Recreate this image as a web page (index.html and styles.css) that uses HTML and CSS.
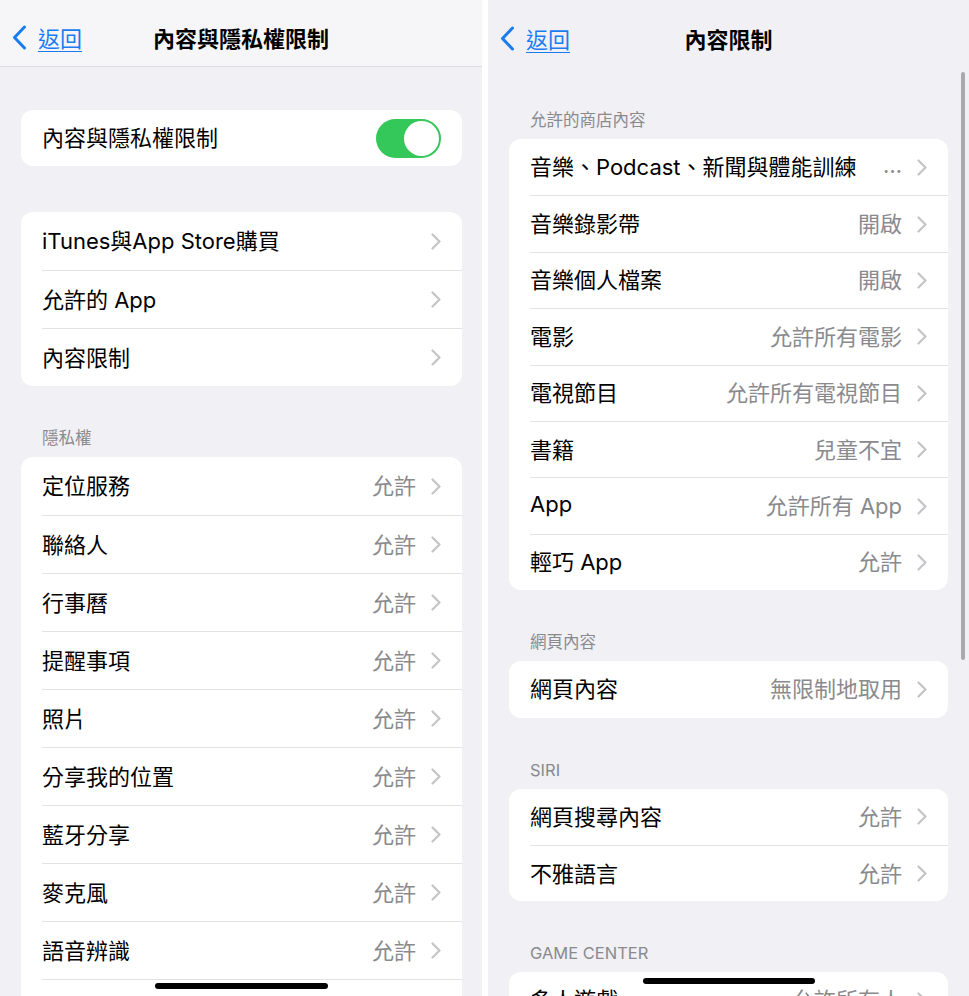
FILE: index.html
```html
<!DOCTYPE html>
<html lang="zh-Hant">
<head>
    <meta charset="UTF-8">
    <meta name="viewport" content="width=device-width, initial-scale=1.0">
    <title>內容與隱私權限制</title>
    <link rel="stylesheet" href="styles.css">
</head>
<body>
    <div class="screens">
        <!-- Pantalla izquierda -->
        <section class="phone phone-left">
            <header class="nav nav-divided">
                <a class="back" href="#">
                    <svg width="15" height="25" viewBox="0 0 15 25"><path d="M12.5 2 L2.5 12.5 L12.5 23" fill="none" stroke="#1b7cf2" stroke-width="3" stroke-linecap="round" stroke-linejoin="round"/></svg>
                    <span>返回</span>
                </a>
                <h1 class="nav-title">內容與隱私權限制</h1>
                <span></span>
            </header>
            <div class="content content-left">
                <div class="group group-toggle">
                    <div class="row">
                        <span class="label">內容與隱私權限制</span>
                        <span class="toggle"></span>
                    </div>
                </div>

                <div class="group">
                    <div class="row"><span class="label">iTunes與App Store購買</span><span class="value"></span><svg class="chev" width="10" height="17" viewBox="0 0 10 17"><path d="M1.5 1.5 L8.5 8.5 L1.5 15.5" /></svg></div>
                    <div class="row"><span class="label">允許的 App</span><span class="value"></span><svg class="chev" width="10" height="17" viewBox="0 0 10 17"><path d="M1.5 1.5 L8.5 8.5 L1.5 15.5" /></svg></div>
                    <div class="row"><span class="label">內容限制</span><span class="value"></span><svg class="chev" width="10" height="17" viewBox="0 0 10 17"><path d="M1.5 1.5 L8.5 8.5 L1.5 15.5" /></svg></div>
                </div>

                <h2 class="section-title">隱私權</h2>
                <div class="group group-flush" id="privacyList"></div>
            </div>
            <div class="home-bar"></div>
        </section>

        <!-- Pantalla derecha -->
        <section class="phone phone-right">
            <header class="nav">
                <a class="back" href="#">
                    <svg width="15" height="25" viewBox="0 0 15 25"><path d="M12.5 2 L2.5 12.5 L12.5 23" fill="none" stroke="#1b7cf2" stroke-width="3" stroke-linecap="round" stroke-linejoin="round"/></svg>
                    <span>返回</span>
                </a>
                <h1 class="nav-title">內容限制</h1>
                <span></span>
            </header>
            <div class="content content-right">
                <h2 class="section-title">允許的商店內容</h2>
                <div class="group" id="storeList"></div>

                <h2 class="section-title">網頁內容</h2>
                <div class="group" id="webList"></div>

                <h2 class="section-title">SIRI</h2>
                <div class="group" id="siriList"></div>

                <h2 class="section-title">GAME CENTER</h2>
                <div class="group" id="gameList"></div>
            </div>
            <div class="scroll-bar"></div>
            <div class="home-bar"></div>
        </section>
    </div>

    <script>
        const chevron = '<svg class="chev" width="10" height="17" viewBox="0 0 10 17"><path d="M1.5 1.5 L8.5 8.5 L1.5 15.5" /></svg>';

        const listas = {
            privacyList: [
                ['定位服務', '允許'],
                ['聯絡人', '允許'],
                ['行事曆', '允許'],
                ['提醒事項', '允許'],
                ['照片', '允許'],
                ['分享我的位置', '允許'],
                ['藍牙分享', '允許'],
                ['麥克風', '允許'],
                ['語音辨識', '允許'],
                ['Apple 廣告', '允許']
            ],
            storeList: [
                ['音樂、Podcast、新聞與體能訓練', '…'],
                ['音樂錄影帶', '開啟'],
                ['音樂個人檔案', '開啟'],
                ['電影', '允許所有電影'],
                ['電視節目', '允許所有電視節目'],
                ['書籍', '兒童不宜'],
                ['App', '允許所有 App'],
                ['輕巧 App', '允許']
            ],
            webList: [
                ['網頁內容', '無限制地取用']
            ],
            siriList: [
                ['網頁搜尋內容', '允許'],
                ['不雅語言', '允許']
            ],
            gameList: [
                ['多人遊戲', '允許所有人'],
                ['加入朋友', '允許']
            ]
        };

        Object.keys(listas).forEach(id => {
            const contenedor = document.getElementById(id);
            listas[id].forEach(item => {
                const fila = document.createElement('div');
                fila.className = 'row';
                fila.innerHTML = `
                    <span class="label">${item[0]}</span>
                    <span class="value">${item[1]}</span>
                    ${chevron}
                `;
                contenedor.appendChild(fila);
            });
        });
    </script>
</body>
</html>
```

FILE: styles.css
```css
* {
    box-sizing: border-box;
}
body {
    margin: 0;
    padding: 0;
    background: #ffffff;
    font-family: Inter, "Noto Sans CJK TC", sans-serif;
    color: #000;
}
.screens {
    display: flex;
    gap: 6px;
    height: 996px;
    overflow: hidden;
}
.phone {
    position: relative;
    background: #f0f0f5;
    height: 996px;
    overflow: hidden;
}
.phone-left {
    width: 482px;
}
.phone-right {
    width: 481px;
}
/* Barra de navegación */
.nav {
    display: grid;
    grid-template-columns: 1fr auto 1fr;
    align-items: center;
    height: 67px;
    padding-top: 8px;
}
.nav-divided {
    background: #f6f6f9;
    border-bottom: 1px solid #dddde1;
}
.back {
    display: flex;
    align-items: center;
    gap: 11px;
    padding-left: 12px;
    color: #1b7cf2;
    font-size: 22px;
    text-decoration: underline;
    text-underline-offset: 4px;
    text-decoration-thickness: 1px;
}
.back svg {
    margin-top: 1px;
}
.nav-title {
    margin: 0;
    font-size: 22px;
    font-weight: 700;
    text-align: center;
}
/* Contenido */
.content {
    padding: 0 20px 0 21px;
}
.content-left {
    padding-top: 43px;
}
.content-right {
    padding: 43px 21px 0 21px;
}
.group {
    background: #fff;
    border-radius: 12px;
    overflow: hidden;
}
.group-toggle {
    margin-bottom: 46px;
}
.group-toggle .row {
    height: 56px;
}
.section-title {
    margin: 42px 0 9px 0;
    padding-left: 21px;
    font-size: 16.5px;
    line-height: 20px;
    font-weight: 400;
    color: #8a8a8e;
}
.content-right .section-title:first-child {
    margin-top: 0;
}
.group-flush {
    border-radius: 12px 12px 0 0;
}
.row {
    display: flex;
    align-items: center;
    margin-left: 21px;
    padding-right: 21px;
    height: 58px;
    font-size: 22px;
}
.row + .row {
    border-top: 1px solid #e2e2e5;
}
.phone-right .row {
    height: 56.4px;
}
.label {
    flex: 1;
    white-space: nowrap;
    padding-bottom: 4px;
}
.value {
    color: #8a8a8e;
    margin-right: 15px;
    white-space: nowrap;
    padding-bottom: 4px;
}
.chev {
    flex-shrink: 0;
}
.chev path {
    fill: none;
    stroke: #c4c4c8;
    stroke-width: 2.2;
    stroke-linecap: round;
    stroke-linejoin: round;
}
.toggle {
    position: relative;
    width: 65px;
    height: 39px;
    border-radius: 20px;
    background: #34c759;
}
.toggle::after {
    content: "";
    position: absolute;
    top: 2px;
    right: 2px;
    width: 35px;
    height: 35px;
    border-radius: 50%;
    background: #fff;
}
/* Indicadores superpuestos */
.home-bar {
    position: absolute;
    left: 155px;
    top: 983px;
    width: 173px;
    height: 6px;
    border-radius: 3px;
    background: #000;
}
.phone-right .home-bar {
    top: 978px;
    width: 172px;
}
.scroll-bar {
    position: absolute;
    right: 4px;
    top: 72px;
    width: 4px;
    height: 588px;
    border-radius: 2px;
    background: #a8a8ad;
}
```
